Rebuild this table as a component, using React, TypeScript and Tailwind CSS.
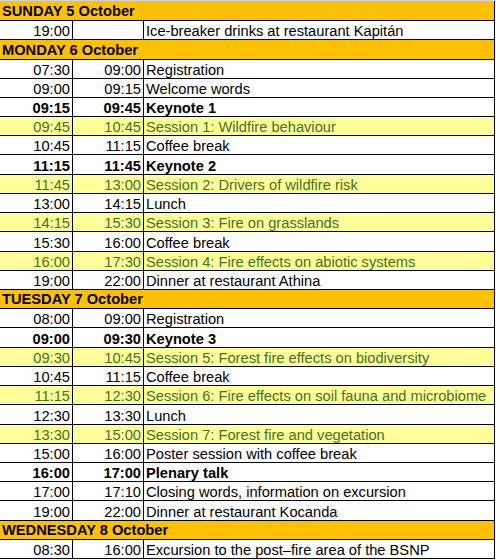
type Row =
  | { kind: 'day'; label: string; h: string }
  | { kind: 'item'; from: string; to: string; title: string; h: string; tone?: 'bold' | 'session' };

const rows: Row[] = [
  { kind: 'day', label: 'SUNDAY 5 October', h: 'h-[20px]' },
  { kind: 'item', from: '19:00', to: '', title: 'Ice-breaker drinks at restaurant Kapitán', h: 'h-[19px]' },
  { kind: 'day', label: 'MONDAY 6 October', h: 'h-[20px]' },
  { kind: 'item', from: '07:30', to: '09:00', title: 'Registration', h: 'h-[19px]' },
  { kind: 'item', from: '09:00', to: '09:15', title: 'Welcome words', h: 'h-[19px]' },
  { kind: 'item', from: '09:15', to: '09:45', title: 'Keynote 1', h: 'h-[19px]', tone: 'bold' },
  { kind: 'item', from: '09:45', to: '10:45', title: 'Session 1: Wildfire behaviour', h: 'h-[19px]', tone: 'session' },
  { kind: 'item', from: '10:45', to: '11:15', title: 'Coffee break', h: 'h-[19px]' },
  { kind: 'item', from: '11:15', to: '11:45', title: 'Keynote 2', h: 'h-[20px]', tone: 'bold' },
  { kind: 'item', from: '11:45', to: '13:00', title: 'Session 2: Drivers of wildfire risk', h: 'h-[19px]', tone: 'session' },
  { kind: 'item', from: '13:00', to: '14:15', title: 'Lunch', h: 'h-[19px]' },
  { kind: 'item', from: '14:15', to: '15:30', title: 'Session 3: Fire on grasslands', h: 'h-[19px]', tone: 'session' },
  { kind: 'item', from: '15:30', to: '16:00', title: 'Coffee break', h: 'h-[20px]' },
  { kind: 'item', from: '16:00', to: '17:30', title: 'Session 4: Fire effects on abiotic systems', h: 'h-[19px]', tone: 'session' },
  { kind: 'item', from: '19:00', to: '22:00', title: 'Dinner at restaurant Athina', h: 'h-[19px]' },
  { kind: 'day', label: 'TUESDAY 7 October', h: 'h-[19px]' },
  { kind: 'item', from: '08:00', to: '09:00', title: 'Registration', h: 'h-[19px]' },
  { kind: 'item', from: '09:00', to: '09:30', title: 'Keynote 3', h: 'h-[20px]', tone: 'bold' },
  { kind: 'item', from: '09:30', to: '10:45', title: 'Session 5: Forest fire effects on biodiversity', h: 'h-[19px]', tone: 'session' },
  { kind: 'item', from: '10:45', to: '11:15', title: 'Coffee break', h: 'h-[19px]' },
  { kind: 'item', from: '11:15', to: '12:30', title: 'Session 6: Fire effects on soil fauna and microbiome', h: 'h-[19px]', tone: 'session' },
  { kind: 'item', from: '12:30', to: '13:30', title: 'Lunch', h: 'h-[20px]' },
  { kind: 'item', from: '13:30', to: '15:00', title: 'Session 7: Forest fire and vegetation', h: 'h-[19px]', tone: 'session' },
  { kind: 'item', from: '15:00', to: '16:00', title: 'Poster session with coffee break', h: 'h-[19px]' },
  { kind: 'item', from: '16:00', to: '17:00', title: 'Plenary talk', h: 'h-[19px]', tone: 'bold' },
  { kind: 'item', from: '17:00', to: '17:10', title: 'Closing words, information on excursion', h: 'h-[19px]' },
  { kind: 'item', from: '19:00', to: '22:00', title: 'Dinner at restaurant Kocanda', h: 'h-[20px]' },
  { kind: 'day', label: 'WEDNESDAY 8 October', h: 'h-[19px]' },
  { kind: 'item', from: '08:30', to: '16:00', title: 'Excursion to the post–fire area of the BSNP', h: 'h-[19px]' },
];

function ScheduleRow({ row }: { row: Row }) {
  if (row.kind === 'day') {
    return (
      <div className={`${row.h} flex items-end border-b border-black bg-[#ffc000] pl-[2px] font-bold`}>
        <span className="leading-[17px]">{row.label}</span>
      </div>
    );
  }

  const tone =
    row.tone === 'session'
      ? 'bg-[#ffff99] text-[#3f7326]'
      : row.tone === 'bold'
        ? 'bg-white font-bold text-black'
        : 'bg-white text-black';

  return (
    <div className={`${row.h} flex border-b border-black ${tone}`}>
      <div className="flex w-[73px] items-end justify-end border-r border-black pr-[2px]">
        <span className="leading-[16px]">{row.from}</span>
      </div>
      <div className="flex w-[71px] items-end justify-end border-r border-black pr-[2px]">
        <span className="leading-[16px]">{row.to}</span>
      </div>
      <div className="flex flex-1 items-end overflow-hidden whitespace-nowrap pl-[2px]">
        <span className="leading-[16px]">{row.title}</span>
      </div>
    </div>
  );
}

export default function App() {
  return (
    <div className="h-[560px] w-[496px] overflow-hidden border-t border-[#d4d4d4] bg-white font-['Liberation_Sans',Arial,sans-serif] text-[14.67px] text-black">
      <div className="w-[495px] border-r border-black">
        {rows.map((row, i) => (
          <ScheduleRow key={i} row={row} />
        ))}
      </div>
    </div>
  );
}
